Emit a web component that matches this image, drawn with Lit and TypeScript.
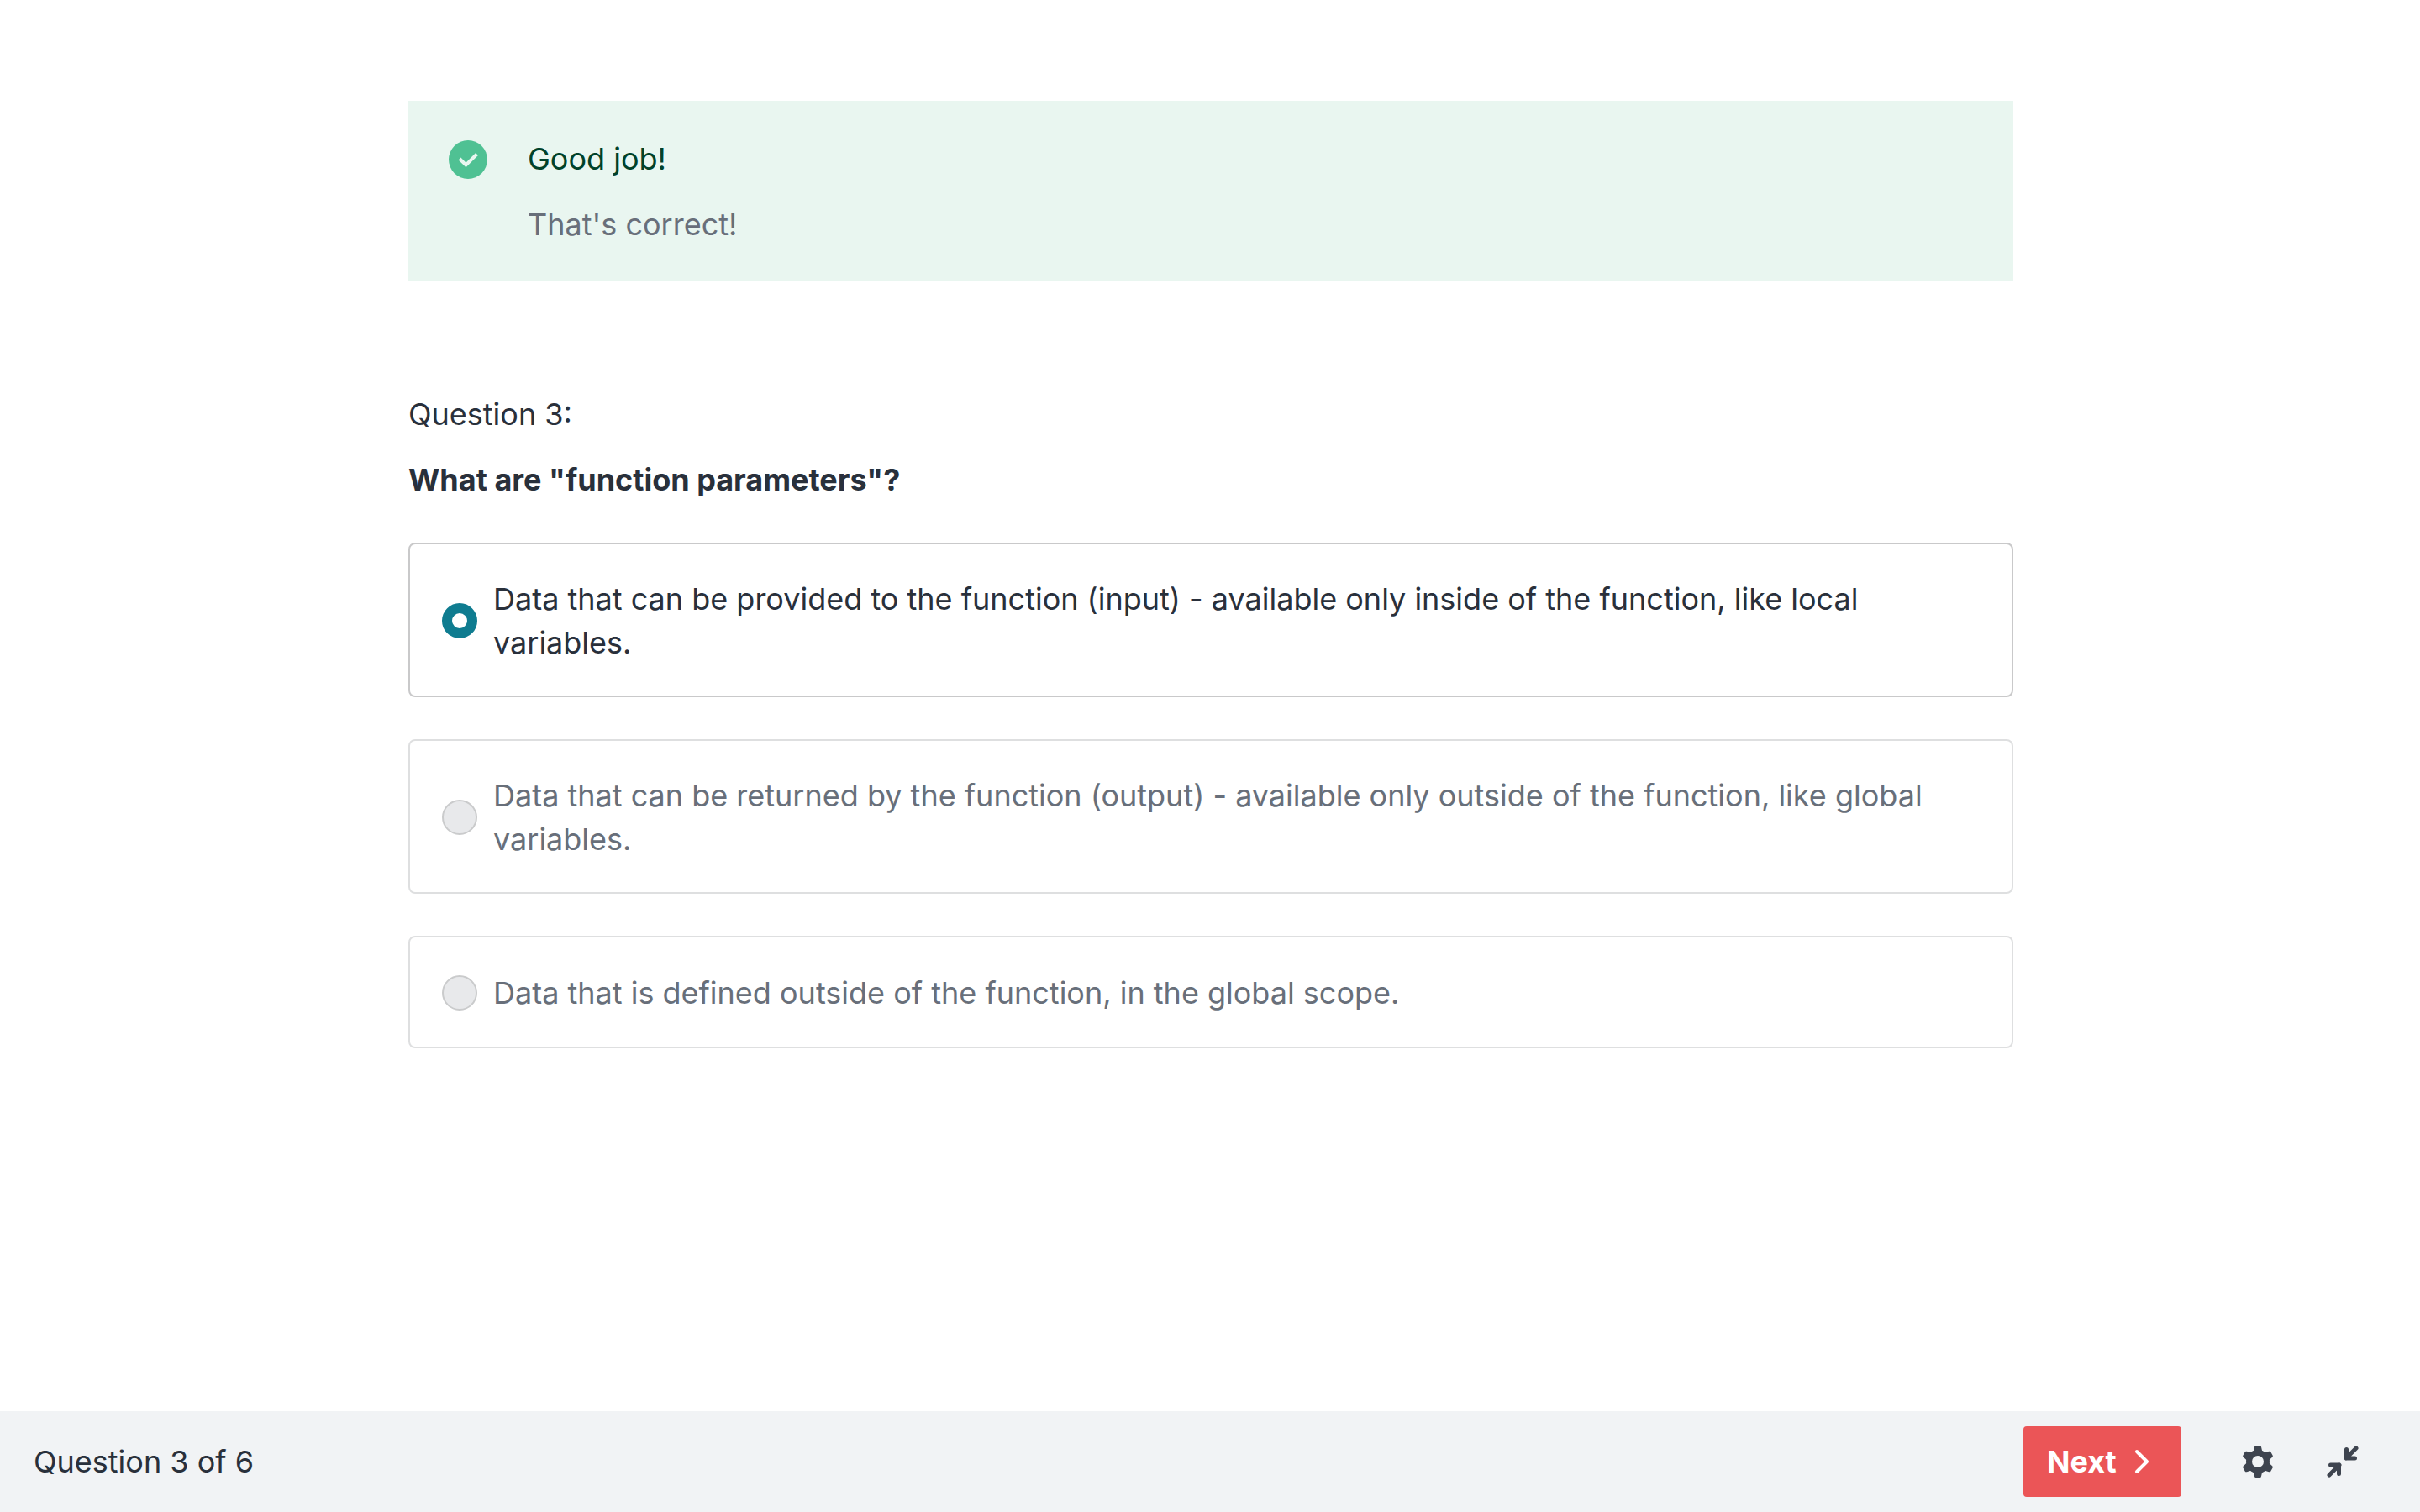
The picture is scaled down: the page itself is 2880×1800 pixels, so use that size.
import { LitElement, html, css, svg } from "lit";
import { customElement, state } from "lit/decorators.js";

interface Option {
  id: string;
  text: string;
}

const OPTIONS: Option[] = [
  {
    id: "input",
    text: "Data that can be provided to the function (input) - available only inside of the function, like local variables.",
  },
  {
    id: "output",
    text: "Data that can be returned by the function (output) - available only outside of the function, like global variables.",
  },
  {
    id: "global",
    text: "Data that is defined outside of the function, in the global scope.",
  },
];

const GEAR_TEETH = [0, 60, 120, 180, 240, 300];

@customElement("app-root")
export class AppRoot extends LitElement {
  @state() private selected = "input";

  static styles = css`
    :host {
      display: flex;
      flex-direction: column;
      min-height: 100vh;
      box-sizing: border-box;
      background: #fff;
      color: #29303b;
      font-family: Inter, "Liberation Sans", sans-serif;
      font-size: 36px;
      line-height: 52px;
    }
    * {
      box-sizing: border-box;
    }
    p,
    h1,
    fieldset {
      margin: 0;
      padding: 0;
      border: 0;
      min-width: 0;
    }
    main {
      flex: 1;
      width: 100%;
      max-width: 1990px;
      margin: 0 auto;
      padding: 120px 39px 120px 41px;
    }
    .alert {
      display: flex;
      align-items: flex-start;
      gap: 48px;
      padding: 43px 48px 41px;
      background: #e9f6f0;
    }
    .alert-icon {
      flex: none;
      width: 46px;
      height: 54px;
    }
    .alert-body {
      display: grid;
      gap: 26px;
    }
    .alert-title {
      color: #00422a;
    }
    .alert-text {
      color: #686f7a;
    }
    .question {
      display: grid;
      gap: 49px;
      margin-top: 133px;
    }
    .heading {
      display: grid;
      gap: 26px;
    }
    h1 {
      font-size: inherit;
      font-weight: 700;
    }
    .options {
      display: grid;
      gap: 50px;
    }
    .option {
      display: flex;
      align-items: center;
      gap: 19px;
      min-height: 134px;
      padding: 39px 38px 37px;
      border: 2px solid #dedfe0;
      border-radius: 8px;
      color: #686f7a;
    }
    .option.selected {
      border-color: #c9c9ca;
      color: #29303b;
    }
    .radio {
      appearance: none;
      flex: none;
      width: 42px;
      height: 42px;
      margin: 0;
      border: 2px solid #cacbcc;
      border-radius: 50%;
      background: #e8e9eb;
    }
    .radio:checked {
      border: 12px solid #0f7c90;
      background: #fff;
    }
    footer {
      display: flex;
      align-items: center;
      justify-content: space-between;
      min-height: 120px;
      padding: 18px 73px 18px 40px;
      background: #f1f3f5;
    }
    .actions {
      display: flex;
      align-items: center;
    }
    button {
      display: flex;
      align-items: center;
      margin: 0;
      padding: 0;
      border: 0;
      background: none;
      color: #3e444f;
      font: inherit;
      cursor: pointer;
    }
    .next {
      justify-content: space-between;
      width: 188px;
      height: 84px;
      margin-right: 72px;
      padding: 0 38px 0 28px;
      border-radius: 4px;
      background: #eb5557;
      color: #fff;
      font-weight: 700;
    }
    .tool + .tool {
      margin-left: 63px;
    }
    svg {
      display: block;
    }
  `;

  render() {
    return html`
      <main>
        <section class="alert" role="status">
          <svg class="alert-icon" viewBox="0 0 46 54" aria-hidden="true">
            <circle cx="23" cy="27" r="23" fill="#4fc193" />
            <path d="M13 26 20.500 33.500 33.500 20.500" fill="none" stroke="#e9f6f0" stroke-width="4" />
          </svg>
          <div class="alert-body">
            <p class="alert-title">Good job!</p>
            <p class="alert-text">That's correct!</p>
          </div>
        </section>

        <section class="question">
          <div class="heading">
            <p>Question 3:</p>
            <h1 id="prompt">What are "function parameters"?</h1>
          </div>
          <fieldset class="options" aria-labelledby="prompt">
            ${OPTIONS.map(
              (o) => html`
                <label class="option ${o.id === this.selected ? "selected" : ""}">
                  <input
                    class="radio"
                    type="radio"
                    name="answer"
                    .value=${o.id}
                    .checked=${o.id === this.selected}
                    ?disabled=${o.id !== this.selected}
                  />
                  <span>${o.text}</span>
                </label>
              `
            )}
          </fieldset>
        </section>
      </main>

      <footer>
        <span>Question 3 of 6</span>
        <div class="actions">
          <button class="next" type="button">
            Next
            <svg width="18" height="30" viewBox="0 0 18 30" aria-hidden="true">
              <path d="M3 3 15 15 3 27" fill="none" stroke="currentColor" stroke-width="4" stroke-linecap="round" stroke-linejoin="round" />
            </svg>
          </button>
          <button class="tool" type="button" aria-label="Settings">
            <svg width="38" height="38" viewBox="-19 -19 38 38" aria-hidden="true">
              <mask id="hub" maskUnits="userSpaceOnUse" x="-19" y="-19" width="38" height="38">
                <rect x="-19" y="-19" width="38" height="38" fill="#fff" />
                <circle r="7" fill="#000" />
              </mask>
              <g fill="currentColor" mask="url(#hub)">
                <circle r="14" />
                ${GEAR_TEETH.map(
                  (a) => svg`<path transform="rotate(${a})" d="M-5.500-11-4-17.500Q-3.700-19-2.500-19H2.500Q3.700-19 4-17.500L5.500-11Z" />`
                )}
              </g>
            </svg>
          </button>
          <button class="tool" type="button" aria-label="Exit full screen">
            <svg width="38" height="38" viewBox="0 0 38 38" fill="none" stroke="currentColor" stroke-width="5" stroke-linecap="round" stroke-linejoin="round" aria-hidden="true">
              <path d="M35 3 23 15M23.500 4.500V15H33.500M3 35 15 23M14.500 33.500V23H4.500" />
            </svg>
          </button>
        </div>
      </footer>
    `;
  }
}
